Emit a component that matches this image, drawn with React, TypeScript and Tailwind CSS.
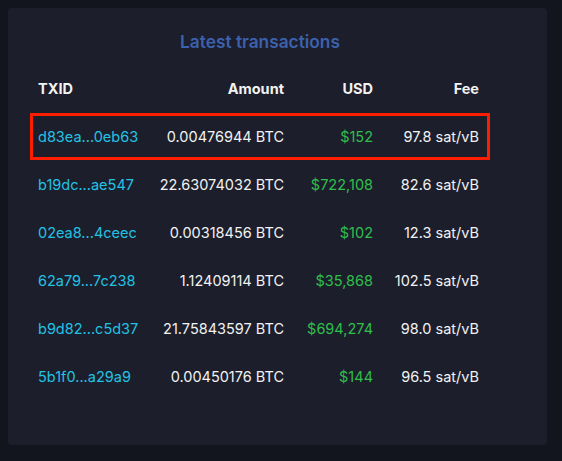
import React from 'react';

type Tx = { id: string; amount: string; usd: string; fee: string };

const txs: Tx[] = [
  { id: 'd83ea...0eb63', amount: '0.00476944 BTC', usd: '$152', fee: '97.8 sat/vB' },
  { id: 'b19dc...ae547', amount: '22.63074032 BTC', usd: '$722,108', fee: '82.6 sat/vB' },
  { id: '02ea8...4ceec', amount: '0.00318456 BTC', usd: '$102', fee: '12.3 sat/vB' },
  { id: '62a79...7c238', amount: '1.12409114 BTC', usd: '$35,868', fee: '102.5 sat/vB' },
  { id: 'b9d82...c5d37', amount: '21.75843597 BTC', usd: '$694,274', fee: '98.0 sat/vB' },
  { id: '5b1f0...a29a9', amount: '0.00450176 BTC', usd: '$144', fee: '96.5 sat/vB' },
];

const cols = 'grid grid-cols-[130px_116px_89px_106px] items-center h-12 pl-2 whitespace-nowrap';
const right = 'flex justify-end';

export default function App() {
  return (
    <div className="min-h-[461px] bg-[#13151e] p-2 font-['Inter',sans-serif]">
      <div className="relative w-[539px] h-[437px] rounded-[4px] bg-[#1c1e2b] pl-[22px] pt-5">
        <div className="w-[460px]">
          <h2 className="text-center text-[17.3px] font-semibold leading-7 text-[#3c61ad]">
            Latest transactions
          </h2>
          <div className="mt-[9px] text-[14.5px] text-[#f2f2f2]">
            <div className={cols + ' font-bold'}>
              <span>TXID</span>
              <span className={right}>Amount</span>
              <span className={right}>USD</span>
              <span className={right}>Fee</span>
            </div>
            {txs.map((tx, i) => (
              <div key={tx.id} className={cols + ' relative'}>
                <span className="text-[#22c2e4]">{tx.id}</span>
                <span className={right}>{tx.amount}</span>
                <span className={right + ' text-[#2fbf4b]'}>{tx.usd}</span>
                <span className={right}>{tx.fee}</span>
                {i === 0 && (
                  <div className="absolute inset-0 h-[47px] border-[3px] border-[#ff1d00]" />
                )}
              </div>
            ))}
          </div>
        </div>
      </div>
    </div>
  );
}
